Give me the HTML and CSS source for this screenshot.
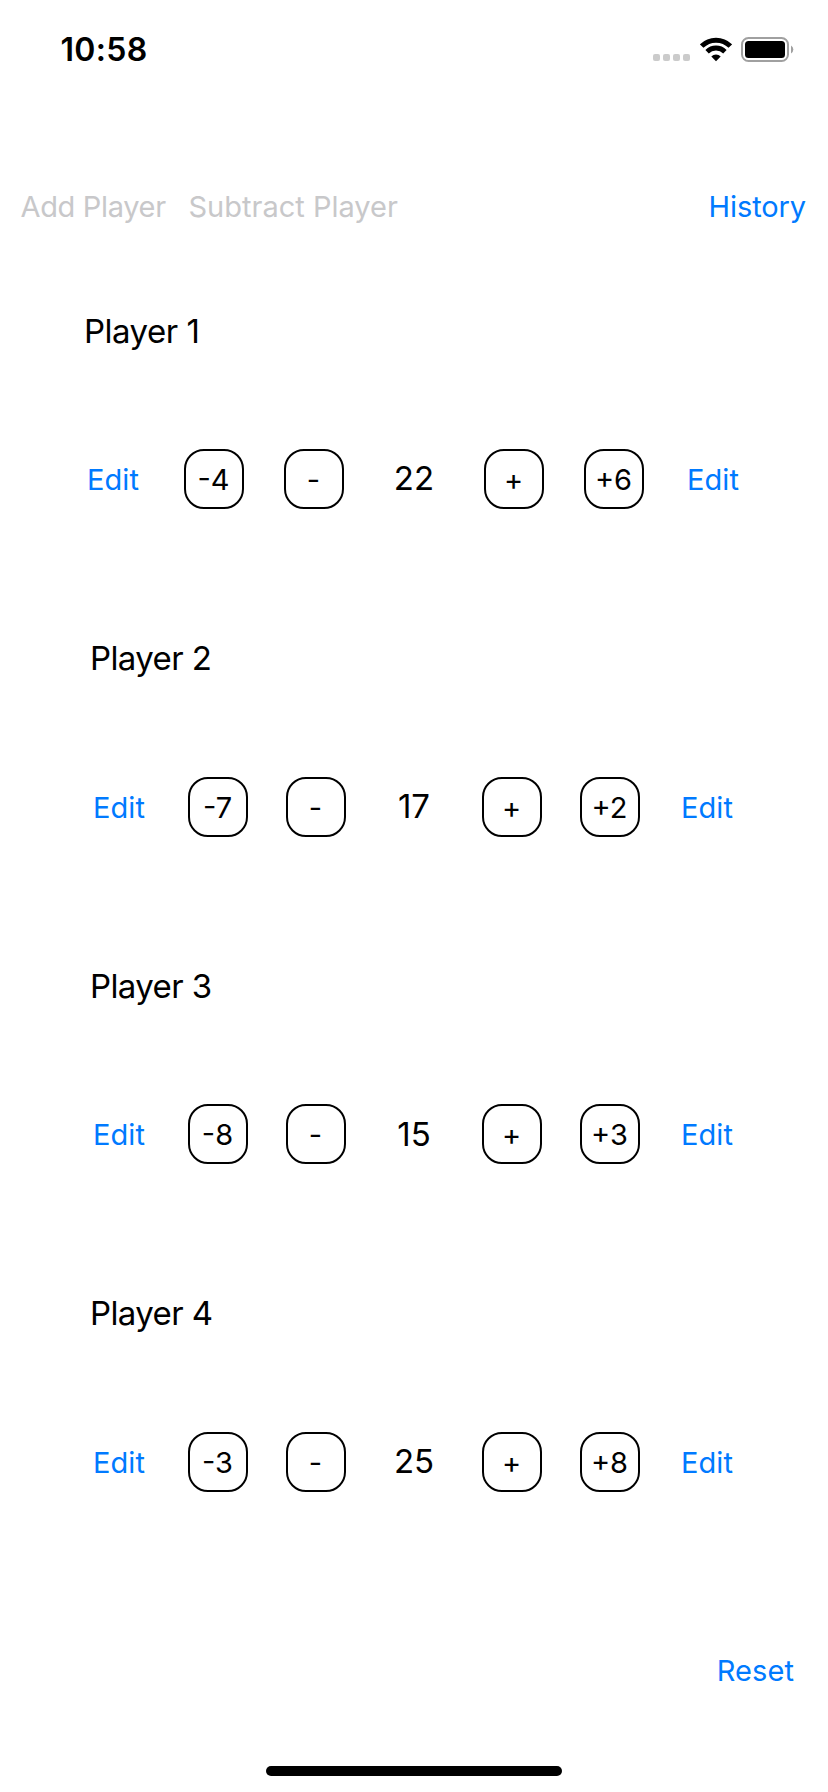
FILE: index.html
```html
<!DOCTYPE html>
<html lang="en">
<head>
<meta charset="utf-8">
<title>Score Keeper</title>
<link rel="stylesheet" href="styles.css">
</head>
<body>
<div class="screen">
  <header class="status">
    <span class="time">10:58</span>
    <div class="indicators">
      <svg class="signal" width="38" height="7" viewBox="0 0 38 7" fill="#cbcbcb"><rect width="7" height="7" rx="2"/><rect x="10" width="7" height="7" rx="2"/><rect x="20" width="7" height="7" rx="2"/><rect x="30" width="7" height="7" rx="2"/></svg>
      <svg class="wifi" width="32" height="25" viewBox="0 0 32 25" fill="none" stroke="#000"><path d="M1.7 9.1A20.3 20.3 0 0 1 30.3 9.1" stroke-width="5"/><path d="M7.1 14.7A12.6 12.6 0 0 1 24.9 14.7" stroke-width="4.8"/><path d="M16 24.2L11.3 19.5A6.7 6.7 0 0 1 20.7 19.5Z" fill="#000" stroke="none"/></svg>
      <svg class="battery" width="54" height="26" viewBox="0 0 54 26"><rect x="1" y="1" width="46" height="23" rx="6.5" fill="none" stroke="#a0a0a0" stroke-width="2"/><rect x="4" y="4" width="40" height="17" rx="3.5"/><path d="M50 8.5A4.6 4.6 0 0 1 50 16.5Z" fill="#a0a0a0"/></svg>
    </div>
  </header>
  <nav class="toolbar">
    <span class="action disabled add">Add Player</span>
    <span class="action disabled">Subtract Player</span>
    <span class="action history">History</span>
  </nav>
  <main>
    <section class="player wide">
      <h2 class="name">Player 1</h2>
      <div class="controls"><span class="edit">Edit</span><span class="step">-4</span><span class="step">-</span><span class="score">22</span><span class="step">+</span><span class="step">+6</span><span class="edit">Edit</span></div>
    </section>
    <section class="player">
      <h2 class="name">Player 2</h2>
      <div class="controls"><span class="edit">Edit</span><span class="step">-7</span><span class="step">-</span><span class="score">17</span><span class="step">+</span><span class="step">+2</span><span class="edit">Edit</span></div>
    </section>
    <section class="player">
      <h2 class="name">Player 3</h2>
      <div class="controls"><span class="edit">Edit</span><span class="step">-8</span><span class="step">-</span><span class="score">15</span><span class="step">+</span><span class="step">+3</span><span class="edit">Edit</span></div>
    </section>
    <section class="player">
      <h2 class="name">Player 4</h2>
      <div class="controls"><span class="edit">Edit</span><span class="step">-3</span><span class="step">-</span><span class="score">25</span><span class="step">+</span><span class="step">+8</span><span class="edit">Edit</span></div>
    </section>
  </main>
  <footer class="footer">
    <span class="action">Reset</span>
    <div class="home"></div>
  </footer>
</div>
</body>
</html>
```
FILE: styles.css
```css
* { box-sizing: border-box; }
body { margin: 0; background: #fff; color: #000; font-family: Inter, "Liberation Sans", sans-serif; }
.screen { width: 828px; height: 1792px; display: flex; flex-direction: column; overflow: hidden; }

.status { height: 186px; display: flex; justify-content: space-between; align-items: flex-start; padding: 30px 33px 0 60.5px; }
.time { font-size: 32px; line-height: 39px; font-weight: 600; letter-spacing: 0.3px; }
.indicators { display: flex; align-items: flex-start; padding-top: 7px; }
.signal { margin-top: 17px; }
.wifi { margin-left: 9px; }
.battery { margin-left: 9px; }

.toolbar { height: 41px; display: flex; align-items: center; padding: 0 22px 0 20.5px; }
.action { color: #007aff; font-size: 29px; line-height: 41px; white-space: nowrap; }
.disabled { color: #c8c8ca; }
.add { width: 168px; letter-spacing: -0.34px; }
.history { margin-left: auto; letter-spacing: -0.1px; }

main { margin-top: 83.5px; height: 1310.7px; }
.player { --pitch: 98px; height: 327.67px; width: calc(var(--pitch) * 7); margin: 0 auto; }
.wide { --pitch: 100px; }
.name { margin: 0 0 98.5px; padding-left: 19px; font-size: 33px; font-weight: 400; line-height: 40px; letter-spacing: -0.6px; }
.wide .name { padding-left: 20px; letter-spacing: -0.5px; }
.controls { display: grid; grid-template-columns: repeat(7, var(--pitch)); justify-items: center; height: 60px; }
.edit { padding-right: 2px; color: #007aff; font-size: 29px; line-height: 61px; letter-spacing: 0.1px; }
.step { width: 60px; height: 60px; padding-right: 1px; border: 2px solid #000; border-radius: 20px; font-size: 29px; line-height: 57px; text-align: center; }
.score { margin-top: -0.55px; font-size: 33px; line-height: 60px; }

.footer { display: flex; flex-direction: column; margin-top: 28.8px; padding-right: 34px; }
.footer .action { align-self: flex-end; letter-spacing: 0.1px; }
.home { width: 296px; height: 10px; margin: 75px 0 0 266px; border-radius: 5px; background: #000; }
```
